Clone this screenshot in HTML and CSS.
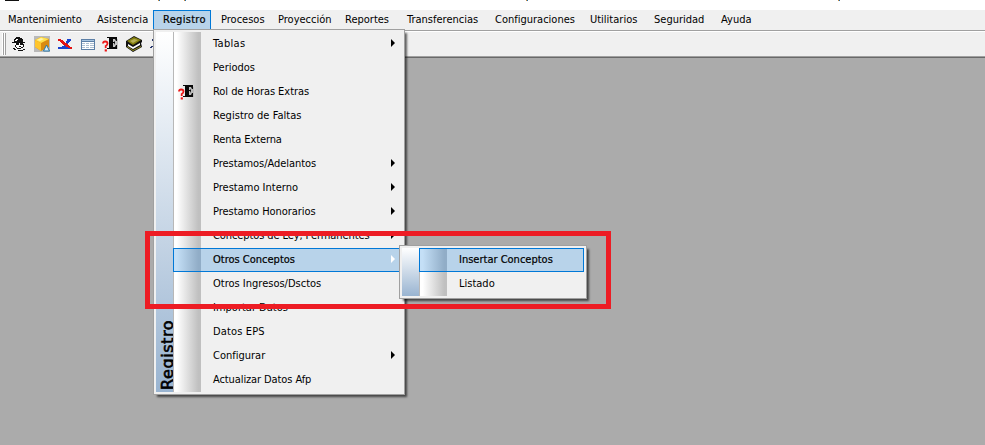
FILE: index.html
```
<!DOCTYPE html>
<html lang="es">
<head>
<meta charset="utf-8">
<title>Registro</title>
<link rel="stylesheet" href="styles.css">
</head>
<body>
<div class="window">
  <div class="titlebar"><svg width="985" height="10" shape-rendering="crispEdges"><path d="M5 0h14v1H5z" fill="#111"/><path d="M158 0h1v1h-1zM184 0h1v1h-1zM526 0h1v1h-1zM838 0h1v1h-1z" fill="#d18a3a"/><path d="M159 0h1v1h-1zM185 0h1v1h-1zM527 0h1v1h-1zM839 0h1v1h-1z" fill="#1e6eb0"/></svg></div>
  <nav class="menubar">
    <span class="m1">Mantenimiento</span><span class="m2">Asistencia</span><span class="open">Registro</span><span>Procesos</span><span>Proyección</span><span>Reportes</span><span>Transferencias</span><span>Configuraciones</span><span>Utilitarios</span><span>Seguridad</span><span>Ayuda</span>
  </nav>
  <div class="toolbar">
    <i class="grip"></i><i class="grip"></i>
    <svg class="tool first" width="16" height="16" shape-rendering="crispEdges"><path d="M5 1h4v1h2v1h1v3h2v1H1V6h2V3h1V2h1z" fill="#111"/><path d="M5 3h2v1H5zM4 4h2v1H4z" fill="#fff"/><path d="M4 7h8v3h-1v2H9v1H7v-1H5v-2H4z" fill="#fff"/><path d="M5 7h3v2H5zM9 7h3v2H9zM12 8h1v3h-1zM4 9h1v2H4zM5 11h1v1H5zM8 10h2v1H8zM6 12h4v1H6zM10 11h2v1h-2zM2 12h2v1H2zM3 13h2v1H3zM7 14h5v1H7zM12 13h2v1h-2z" fill="#111"/></svg>
    <svg class="tool" width="16" height="16"><path d="M0 0h16v16H0z" fill="#b9b9b9"/><path d="M1 4l6-3 8 2v8l-8 4-6-4z" fill="#d98b12"/><path d="M1 4l6-3 8 2-8 4z" fill="#ffe04d"/><path d="M1 4l6 3v8l-6-4z" fill="#ffc52c"/><path d="M3 4l4-2 3 1-4 2z" fill="#fff4ac"/><path d="M9.500 15l3-6 3 6z" fill="#d7eaf7" stroke="#2777a8"/></svg>
    <svg class="tool" width="16" height="16" shape-rendering="crispEdges"><path d="M10 3h4v2h-1v1h-1v1h-1v2h1v1h1v1h2v2H1v-2h4v-1h2V9h1V7h1V5h1z" fill="#1742cf"/><path d="M1 3h3v1h2v1h1v1h1v1h2v1h1v1h1v1h1v1h2v2h-2v-1h-2v-1H9v-1H8V9H6V8H5V7H4V6H3V5H1z" fill="#e31212"/></svg>
    <svg class="tool" width="16" height="16" shape-rendering="crispEdges"><path d="M1 3h14v11H1z" fill="#5c7fa6"/><path d="M2 6h12v7H2z" fill="#fff"/><path d="M2 4h12v1H2z" fill="#a9c5e0"/><path d="M2 7h3v1H2zM6 7h3v1H6zM10 7h4v1h-4zM2 9h3v1H2zM6 9h3v1H6zM10 9h4v1h-4zM2 11h3v1H2zM6 11h3v1H6zM10 11h4v1h-4z" fill="#adbfd1"/></svg>
    <svg class="tool qe" width="16" height="16"><use href="#qe"/></svg>
    <svg class="tool" width="16" height="16"><path d="M0 5l8-5 8 4v2l-1 1 1 4-9 5-7-5V8z" fill="#111"/><path d="M1 5l7-4 7 3-8 5z" fill="#858010"/><path d="M4 5l4-2 4 1-5 3z" fill="#b5ae55"/><path d="M2 8l5 3 7-4v2l-7 4-5-3z" fill="#fff"/><path d="M1 10l6 4 8-4v1l-8 4-6-4z" fill="#9b9527"/></svg>
    <svg class="tool" width="16" height="16" shape-rendering="crispEdges"><path d="M3 3h3v2H3zM2 10h5v1H2zM1 11h2v1H1z" fill="#25356d"/></svg>
  </div>
  <main class="workspace"></main>
</div>

<section class="popup main-menu">
  <div class="side"><b>Registro</b></div>
  <ul class="items">
    <li class="sub"><i></i><span class="r1">Tablas</span></li>
    <li><i></i><span>Periodos</span></li>
    <li><i><svg width="17" height="16" viewBox="0 0 17 16"><g id="qe"><path d="M7 3h9v10H7z" fill="#aaa" opacity=".6"/><path d="M5 1h10v4h-1l-1-2h-2v3h1l1-1v4l-1-2h-1v4h2l1-2h1v4H5v-1h2V2H5z" fill="#080808"/><path d="M1 7.500Q1 5.500 3.200 5.500Q5.500 5.500 5.500 7.500Q5.500 9 3.700 10V12" fill="none" stroke="#ed1717" stroke-width="1.800"/><path d="M2.700 13.300h2.200v2.200H2.700z" fill="#ed1717"/></g></svg></i><span class="r3">Rol de Horas Extras</span></li>
    <li><i></i><span class="r4">Registro de Faltas</span></li>
    <li><i></i><span class="r5">Renta Externa</span></li>
    <li class="sub"><i></i><span class="r6">Prestamos/Adelantos</span></li>
    <li class="sub"><i></i><span>Prestamo Interno</span></li>
    <li class="sub"><i></i><span class="r8">Prestamo Honorarios</span></li>
    <li class="sub"><i></i><span class="r9">Conceptos de Ley, Permanentes</span></li>
    <li class="sub active"><i></i><span>Otros Conceptos</span></li>
    <li><i></i><span>Otros Ingresos/Dsctos</span></li>
    <li><i></i><span>Importar Datos</span></li>
    <li><i></i><span class="r13">Datos EPS</span></li>
    <li class="sub"><i></i><span>Configurar</span></li>
    <li><i></i><span class="r15">Actualizar Datos Afp</span></li>
  </ul>
</section>
<section class="popup submenu">
  <div class="side"></div>
  <ul class="items">
    <li class="active"><i></i><span>Insertar Conceptos</span></li>
    <li><i></i><span>Listado</span></li>
  </ul>
</section>
<div class="marker"></div>
</body>
</html>
```
FILE: styles.css
```
* { box-sizing: border-box; }
body { margin: 0; overflow: hidden; font: 11px/24px "DejaVu Sans Condensed", "DejaVu Sans", sans-serif; font-stretch: condensed; color: #000; }
.window { height: 445px; display: flex; flex-direction: column; background: #ababab; }
.titlebar { height: 10px; background: #fff; }
.titlebar svg { display: block; }
.menubar { height: 22px; display: grid; grid-template-columns: 89px 64px 60px 57px 67px 62px 88px 95px 64px 67px 60px; padding-left: 8px; line-height: 19px; background: #f0f0f0; border-bottom: 1px solid #fff; box-shadow: inset 0 -1px #a0a0a0; white-space: nowrap; }
.menubar .open { width: 58px; height: 20px; margin-left: -8px; padding-left: 9px; line-height: 17px; background: #b8d3ea; border: 1px solid #0078d7; letter-spacing: .3px; -webkit-text-stroke: .2px #000; }
.m1 { letter-spacing: -.07px; }
.m2 { letter-spacing: .1px; }
.toolbar { height: 26px; display: flex; align-items: center; background: #f0f0f0; border-bottom: 1px solid #696969; box-shadow: inset 0 -1px #a0a0a0; padding: 0 0 1px 2px; }
.grip { width: 2px; height: 22px; background: #fff; border-right: 1px solid #a0a0a0; }
.tool { margin-right: 7px; flex: none; }
.tool.qe { margin-left: -1px; margin-right: 8px; overflow: visible; }
.first { margin-left: 5px; }
.workspace { flex: 1; }
.popup { position: absolute; display: flex; padding: 2px; background: #f0f0f0; border: 1px solid #a0a0a0; box-shadow: 3px 3px 2px -1px rgba(0,0,0,.6); }
.main-menu { left: 153px; top: 29px; width: 252px; height: 366px; }
.submenu { left: 399px; top: 245px; width: 188px; height: 54px; }
.side { width: 17px; background: linear-gradient(#fff, #99b4d1); display: flex; align-items: flex-end; justify-content: center; overflow: hidden; }
.side b { writing-mode: vertical-rl; transform: rotate(180deg); margin: 0 -6px 2px 0; font: 400 16px/17px "DejaVu Sans", sans-serif; letter-spacing: .55px; -webkit-text-stroke: .6px #000; }
.items { flex: 1; margin: 0; padding: 0; list-style: none; }
.items li { position: relative; height: 24px; display: flex; align-items: center; white-space: nowrap; line-height: 22px; }
.items i { width: 28px; height: 24px; margin-right: 12px; padding: 4px 0 0 4px; flex: none; border-left: 1px solid #b8b8b8; background: linear-gradient(90deg, #fff 10%, #c0c0c0 90%); }
.items i svg { display: block; }
.items .sub::after { content: ""; margin-left: auto; margin-right: 7px; border: 4px solid transparent; border-left: 4px solid #000; border-right: 0; transform: translateY(-1px); }
.items .active { background: #b8d3ea; -webkit-text-stroke: .2px #000; }
.items .active i { background: linear-gradient(90deg, #c4dff6 10%, #91adc7 90%); }
.items .active::before { content: ""; position: absolute; inset: 0; border: 1px solid #0078d7; }
.items .active.sub::after { border-left-color: #fff; }
.items .r1 { letter-spacing: .3px; }
.items .r3, .items .r6, .items .r8 { letter-spacing: -.05px; }
.items .r4 { letter-spacing: .05px; }
.items .r5, .items .r9, .items .r15 { letter-spacing: -.1px; }
.items .r13 { letter-spacing: .15px; }
.marker { position: absolute; left: 145px; top: 231px; width: 466px; height: 78px; border: 5px solid #ed1c24; }
```
